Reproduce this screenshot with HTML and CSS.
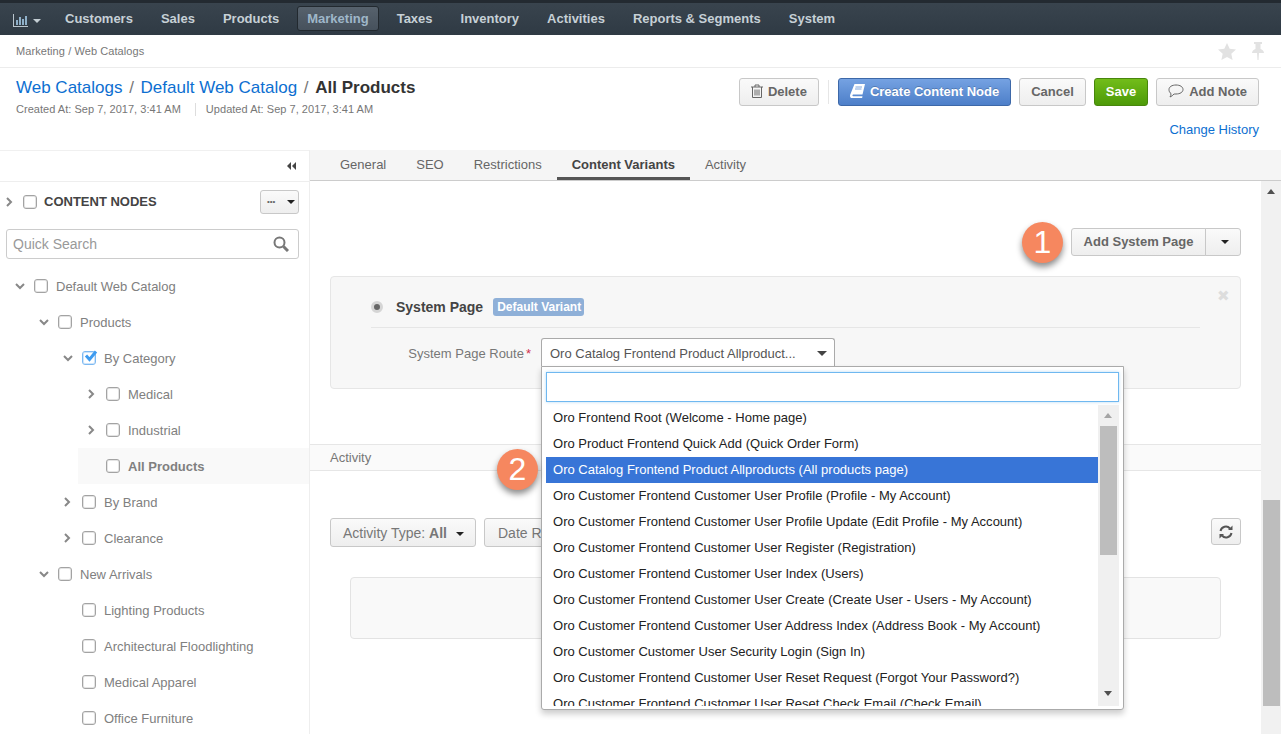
FILE: index.html
```html
<!DOCTYPE html>
<html lang="en">
<head>
    <meta charset="UTF-8">
    <title>All Products - Web Catalogs</title>
    <link rel="stylesheet" href="styles.css">
</head>
<body>
    <nav class="topnav">
        <div class="nav-dash">
            <svg width="15" height="13" viewBox="0 0 15 13"><path d="M0 0h1v12h14v1H0z" fill="#b9c5cd"/><path d="M3 6h2v5H3zM6 3h2v8H6zM9 5h2v6H9zM12 2h2v9h-2z" fill="#8fb0c9"/></svg>
            <span class="nav-caret"></span>
        </div>
        <a class="nav-item">Customers</a>
        <a class="nav-item">Sales</a>
        <a class="nav-item">Products</a>
        <a class="nav-item active">Marketing</a>
        <a class="nav-item">Taxes</a>
        <a class="nav-item">Inventory</a>
        <a class="nav-item">Activities</a>
        <a class="nav-item">Reports &amp; Segments</a>
        <a class="nav-item">System</a>
    </nav>

    <div class="crumbs">
        <span>Marketing / Web Catalogs</span>
        <div class="crumb-icons">
            <svg width="18" height="17" viewBox="0 0 18 17"><path d="M9 0l2.700 5.800 6.300.7-4.700 4.200 1.300 6.300L9 13.900 3.400 17l1.300-6.300L0 6.500l6.300-.7z" fill="#e2e2e2"/></svg>
            <svg width="14" height="18" viewBox="0 0 14 18"><path d="M3 0h8v2H9.500v5c2.500 1 3.500 2.500 3.500 4H8l-.5 7h-1L6 11H1c0-1.500 1-3 3.500-4V2H3z" fill="#e2e2e2"/></svg>
        </div>
    </div>

    <header class="page-head">
        <div>
            <h1 class="title"><a>Web Catalogs</a><i>/</i><a>Default Web Catalog</a><i>/</i><b>All Products</b></h1>
            <div class="meta">
                <span>Created At: Sep 7, 2017, 3:41 AM</span>
                <span class="meta-second">Updated At: Sep 7, 2017, 3:41 AM</span>
            </div>
        </div>
        <div class="head-right">
            <div class="actions">
                <button class="btn">
                    <svg width="12" height="14" viewBox="0 0 12 14" fill="none" stroke="#666"><path d="M0 3h12M4 3V1h4v2M1.500 3v10.500h9V3M4 5.500v6M6 5.500v6M8 5.500v6"/></svg>
                    Delete
                </button>
                <span class="actions-sep"></span>
                <button class="btn btn-blue">
                    <svg width="15" height="14" viewBox="0 0 15 14"><path d="M4.500 0H15l-2.500 10.500H3.500c-1.200 0-1.500 1.700-.3 1.700h9.300l-.4 1.800H2C.3 14-.3 12.500.2 10.800z" fill="#fff"/><path d="M5.500 3h6.500M5 5h6.500" stroke="#7ea6df" fill="none"/></svg>
                    Create Content Node
                </button>
                <button class="btn">Cancel</button>
                <button class="btn btn-green">Save</button>
                <button class="btn">
                    <svg width="16" height="14" viewBox="0 0 16 14" fill="none" stroke="#666"><path d="M8 1c4 0 7 1.800 7 4.500S12 10 8 10c-1 0-1.500 0-2 0-1 1.200-2.500 2.500-4 3 .7-1 1-2 1-3.500C1.500 8.700 1 7 1 5.500 1 2.800 4 1 8 1z"/></svg>
                    Add Note
                </button>
            </div>
            <a class="history">Change History</a>
        </div>
    </header>

    <div class="main">
        <aside class="sidebar">
            <div class="side-top">
                <svg width="9" height="8" viewBox="0 0 9 8"><path d="M4 0v8L0 4zM9 0v8L5 4z" fill="#444"/></svg>
            </div>
            <div class="nodes-head">
                <svg class="chev" width="7" height="10" viewBox="0 0 7 10"><path d="M1 1l4 4-4 4" fill="none" stroke="#888" stroke-width="2"/></svg>
                <span class="check"></span>
                <strong>CONTENT NODES</strong>
                <button class="dots-btn"><span>&#8226;&#8226;&#8226;</span><span class="caret"></span></button>
            </div>
            <div class="quick-search">
                <span>Quick Search</span>
                <svg width="16" height="16" viewBox="0 0 16 16" fill="none" stroke="#777"><circle cx="6.500" cy="6.500" r="5" stroke-width="2"/><path d="M10.500 10.500l4.500 4.500" stroke-width="3"/></svg>
            </div>
            <ul class="tree">
                <li class="row lvl0"><svg class="arrow" width="10" height="7" viewBox="0 0 10 7"><path d="M1 1l4 4 4-4" fill="none" stroke="#888" stroke-width="2"/></svg><span class="check"></span>Default Web Catalog</li>
                <li class="row lvl1"><svg class="arrow" width="10" height="7" viewBox="0 0 10 7"><path d="M1 1l4 4 4-4" fill="none" stroke="#888" stroke-width="2"/></svg><span class="check"></span>Products</li>
                <li class="row lvl2"><svg class="arrow" width="10" height="7" viewBox="0 0 10 7"><path d="M1 1l4 4 4-4" fill="none" stroke="#888" stroke-width="2"/></svg>
                    <span class="check checked"><svg width="15" height="13" viewBox="0 0 15 13"><path d="M3 5.500l3.500 4L13 1.500" fill="none" stroke="#3d9bf0" stroke-width="3"/></svg></span>By Category</li>
                <li class="row lvl3"><svg class="arrow side" width="7" height="10" viewBox="0 0 7 10"><path d="M1 1l4 4-4 4" fill="none" stroke="#888" stroke-width="2"/></svg><span class="check"></span>Medical</li>
                <li class="row lvl3"><svg class="arrow side" width="7" height="10" viewBox="0 0 7 10"><path d="M1 1l4 4-4 4" fill="none" stroke="#888" stroke-width="2"/></svg><span class="check"></span>Industrial</li>
                <li class="row lvl3 current"><span class="arrow-gap"></span><span class="check"></span>All Products</li>
                <li class="row lvl2"><svg class="arrow side" width="7" height="10" viewBox="0 0 7 10"><path d="M1 1l4 4-4 4" fill="none" stroke="#888" stroke-width="2"/></svg><span class="check"></span>By Brand</li>
                <li class="row lvl2"><svg class="arrow side" width="7" height="10" viewBox="0 0 7 10"><path d="M1 1l4 4-4 4" fill="none" stroke="#888" stroke-width="2"/></svg><span class="check"></span>Clearance</li>
                <li class="row lvl1"><svg class="arrow" width="10" height="7" viewBox="0 0 10 7"><path d="M1 1l4 4 4-4" fill="none" stroke="#888" stroke-width="2"/></svg><span class="check"></span>New Arrivals</li>
                <li class="row lvl2"><span class="arrow-gap"></span><span class="check"></span>Lighting Products</li>
                <li class="row lvl2"><span class="arrow-gap"></span><span class="check"></span>Architectural Floodlighting</li>
                <li class="row lvl2"><span class="arrow-gap"></span><span class="check"></span>Medical Apparel</li>
                <li class="row lvl2"><span class="arrow-gap"></span><span class="check"></span>Office Furniture</li>
            </ul>
        </aside>

        <section class="content">
            <div class="tabs">
                <a class="tab">General</a>
                <a class="tab">SEO</a>
                <a class="tab">Restrictions</a>
                <a class="tab active">Content Variants</a>
                <a class="tab">Activity</a>
            </div>
            <div class="content-body">
                <div class="pane">
                    <div class="add-row">
                        <div class="split">
                            <button class="split-main">Add System Page</button>
                            <button class="split-caret"><span class="caret"></span></button>
                        </div>
                    </div>
                    <div class="variant">
                        <span class="variant-close">&#10006;</span>
                        <div class="variant-head">
                            <span class="radio"></span>
                            <strong>System Page</strong>
                            <span class="badge">Default Variant</span>
                        </div>
                        <div class="variant-field">
                            <label>System Page Route<em>*</em></label>
                            <div class="select">
                                <span>Oro Catalog Frontend Product Allproduct...</span>
                                <span class="caret"></span>
                            </div>
                        </div>
                    </div>
                    <div class="activity-bar">Activity</div>
                    <div class="filters">
                        <button class="filter">Activity Type: <b>All</b><span class="caret"></span></button>
                        <button class="filter filter-date">Date R</button>
                        <button class="refresh">
                            <svg width="14" height="14" viewBox="0 0 14 14" fill="none" stroke="#555" stroke-width="2"><path d="M1.500 6a5.500 5.500 0 0 1 9.500-2.500M12.500 8A5.500 5.500 0 0 1 3 10.500"/><path d="M9 5h4.500V.5zM5 9H.5v4.500z" fill="#555" stroke="none"/></svg>
                        </button>
                    </div>
                    <div class="empty-box"></div>

                    <div class="dropdown">
                        <div class="dd-search"></div>
                        <div class="dd-results">
                            <ul class="dd-list">
                                <li>Oro Frontend Root (Welcome - Home page)</li>
                                <li>Oro Product Frontend Quick Add (Quick Order Form)</li>
                                <li class="selected">Oro Catalog Frontend Product Allproducts (All products page)</li>
                                <li>Oro Customer Frontend Customer User Profile (Profile - My Account)</li>
                                <li>Oro Customer Frontend Customer User Profile Update (Edit Profile - My Account)</li>
                                <li>Oro Customer Frontend Customer User Register (Registration)</li>
                                <li>Oro Customer Frontend Customer User Index (Users)</li>
                                <li>Oro Customer Frontend Customer User Create (Create User - Users - My Account)</li>
                                <li>Oro Customer Frontend Customer User Address Index (Address Book - My Account)</li>
                                <li>Oro Customer Customer User Security Login (Sign In)</li>
                                <li>Oro Customer Frontend Customer User Reset Request (Forgot Your Password?)</li>
                                <li>Oro Customer Frontend Customer User Reset Check Email (Check Email)</li>
                            </ul>
                            <div class="dd-scroll">
                                <span class="arrow-up"></span>
                                <span class="dd-thumb"></span>
                                <span class="arrow-down"></span>
                            </div>
                        </div>
                    </div>
                    <span class="step step-one">1</span>
                    <span class="step step-two">2</span>
                </div>
                <div class="page-scroll">
                    <span class="arrow-up dark"></span>
                    <span class="page-thumb"></span>
                </div>
            </div>
        </section>
    </div>
</body>
</html>
```

FILE: styles.css
```css
* {
    box-sizing: border-box;
}
html, body {
    margin: 0;
    height: 734px;
    overflow: hidden;
}
body {
    font-family: "Liberation Sans", Arial, sans-serif;
    font-size: 13px;
    color: #666;
    background-color: #fff;
}
ul {
    list-style: none;
    margin: 0;
    padding: 0;
}
button {
    font-family: inherit;
}

/* top menu */
.topnav {
    height: 35px;
    display: flex;
    align-items: center;
    gap: 8px;
    padding-left: 13px;
    padding-top: 3px;
    background: linear-gradient(#39444e, #2f3a44);
    border-top: 3px solid #232a31;
}
.nav-dash {
    width: 34px;
    display: flex;
    align-items: center;
    gap: 5px;
}
.nav-caret {
    border: 4px solid transparent;
    border-top-color: #c4ced4;
    border-bottom: 0;
}
.nav-item {
    padding: 0 10px;
    height: 24px;
    line-height: 22px;
    font-weight: bold;
    color: #c6d0d6;
    border: 1px solid transparent;
    border-width: 1px 0;
    margin-top: -3px;
}
.nav-item.active {
    color: #9fb7c9;
    height: 25px;
    margin-top: -4px;
    line-height: 23px;
    background: linear-gradient(#57626d, #46515c);
    border: 1px solid #22292f;
    border-radius: 3px;
    padding: 0 9px;
}

/* breadcrumbs */
.crumbs {
    height: 33px;
    padding: 0 16px;
    display: flex;
    justify-content: space-between;
    align-items: center;
    font-size: 11px;
    letter-spacing: .08px;
    color: #777;
    border-bottom: 1px solid #ececec;
}
.crumb-icons {
    display: flex;
    align-items: center;
    gap: 15px;
}

.page-head {
    height: 82px;
    padding: 0 22px 0 16px;
    display: flex;
    justify-content: space-between;
}
.title {
    margin: 10px 0 0;
    font-size: 17px;
    line-height: 20px;
    font-weight: normal;
    color: #333;
}
.title a {
    color: #0d6fd1;
}
.title i {
    font-style: normal;
    color: #777;
    margin: 0 6.7px;
}
.meta {
    margin-top: 5px;
    font-size: 11px;
    line-height: 13px;
    letter-spacing: .03px;
    color: #777;
    display: flex;
}
.meta-second {
    margin-left: 14px;
    padding-left: 10px;
    border-left: 1px solid #ddd;
}
.head-right {
    display: flex;
    flex-direction: column;
    align-items: flex-end;
}
.actions {
    margin-top: 10px;
    display: flex;
    align-items: center;
    gap: 8px;
}
.btn {
    height: 28px;
    padding: 0 11px 2px;
    display: flex;
    align-items: center;
    gap: 5px;
    font-size: 13px;
    font-weight: bold;
    color: #666;
    background: linear-gradient(#fafafa, #eee);
    border: 1px solid #c8c8c8;
    border-radius: 3px;
}
.btn-blue {
    color: #fff;
    background: linear-gradient(#75a2e2, #4d7fc9);
    border-color: #3d68a8;
    text-shadow: 0 -1px 0 rgba(0, 0, 0, .2);
}
.btn-green {
    color: #fff;
    background: linear-gradient(#72bd1a, #4d9a08);
    border-color: #48860d;
}
.actions-sep {
    width: 1px;
    height: 24px;
    margin: 0 1px;
    background-color: #e6e6e6;
}
.history {
    margin-top: 16px;
    color: #0d6fd1;
}

.main {
    height: 584px;
    display: flex;
}

/* sidebar tree */
.sidebar {
    width: 310px;
    flex: none;
    border-right: 1px solid #eee;
    overflow: hidden;
}
.side-top {
    height: 32px;
    padding-right: 13px;
    display: flex;
    justify-content: flex-end;
    align-items: center;
    border-top: 1px solid #f0f0f0;
    border-bottom: 1px solid #eee;
}
.nodes-head {
    height: 39px;
    margin-bottom: 8px;
    padding: 0 10px 0 6px;
    display: flex;
    align-items: center;
}
.nodes-head .chev {
    margin-right: 10px;
}
.nodes-head strong {
    margin-left: 7px;
    font-size: 13px;
    color: #444;
}
.check {
    width: 14px;
    height: 14px;
    flex: none;
    border: 1px solid #a3a3a3;
    border-radius: 3px;
    box-shadow: inset 0 0 0 1px #e4e4e4;
    background-color: #fff;
    position: relative;
}
.check.checked {
    border-color: #7cb9f2;
    box-shadow: inset 0 0 0 1px #cfe4f9;
}
.check svg {
    position: absolute;
    left: 0;
    top: -2px;
}
.dots-btn {
    margin-left: auto;
    width: 39px;
    height: 24px;
    padding: 0 3px 0 6px;
    display: flex;
    justify-content: space-between;
    align-items: center;
    font-size: 8px;
    color: #666;
    background: linear-gradient(#fafafa, #eee);
    border: 1px solid #c8c8c8;
    border-radius: 3px;
}
.caret {
    display: inline-block;
    border: 4px solid transparent;
    border-top-color: #222;
    border-bottom: 0;
}
.quick-search {
    height: 30px;
    margin: 0 10px 0 6px;
    padding: 0 9px 0 6px;
    display: flex;
    justify-content: space-between;
    align-items: center;
    font-size: 14px;
    color: #999;
    border: 1px solid #ccc;
    border-radius: 3px;
}
.tree {
    margin-top: 9px;
}
.row {
    height: 36px;
    display: flex;
    align-items: center;
    color: #808080;
}
.row .check {
    margin-right: 8px;
}
.lvl0 { margin-left: 6px; }
.lvl1 { margin-left: 30px; }
.lvl2 { margin-left: 54px; }
.lvl3 { margin-left: 78px; }
.arrow {
    margin: 0 9px 0 9px;
    flex: none;
}
.arrow.side {
    margin: 0 11px 0 10px;
}
.arrow-gap {
    width: 28px;
    flex: none;
}
.row.current {
    font-weight: bold;
    background-color: #f9f9f9;
}

/* right side */
.content {
    flex: 1;
    min-width: 0;
}
.tabs {
    height: 31px;
    padding-left: 15px;
    display: flex;
    background-color: #f5f5f5;
    border-bottom: 1px solid #ccc;
}
.tab {
    padding: 0 15px;
    line-height: 29px;
    color: #666;
}
.tab.active {
    height: 30px;
    font-weight: bold;
    color: #444;
    border-bottom: 3px solid #555;
}
.content-body {
    height: 553px;
    display: flex;
}
.pane {
    flex: 1;
    position: relative;
    overflow: hidden;
}
.add-row {
    padding: 47px 20px 20px;
    display: flex;
    justify-content: flex-end;
}
.split {
    display: flex;
    height: 28px;
}
.split button {
    font-size: 13px;
    font-weight: bold;
    color: #666;
    background: linear-gradient(#fafafa, #eee);
    border: 1px solid #c8c8c8;
}
.split-main {
    width: 135px;
    padding-bottom: 2px;
    border-radius: 3px 0 0 3px;
}
.split-caret {
    width: 36px;
    margin-left: -1px;
    padding: 0 0 0 3px;
    display: flex;
    justify-content: center;
    align-items: center;
    border-radius: 0 3px 3px 0;
}
.variant {
    height: 113px;
    margin: 0 20px;
    padding: 0 40px;
    background-color: #f7f7f7;
    border: 1px solid #e6e6e6;
    border-radius: 4px;
    position: relative;
}
.variant-close {
    position: absolute;
    right: 10px;
    top: 10px;
    font-size: 15px;
    color: #ddd;
}
.variant-head {
    height: 51px;
    padding-top: 10px;
    display: flex;
    align-items: center;
    border-bottom: 1px solid #e6e6e6;
}
.radio {
    width: 12px;
    height: 12px;
    border-radius: 50%;
    border: 3px solid #d5d5d5;
    background-color: #666;
    margin-right: 13px;
}
.variant-head strong {
    font-size: 14px;
    color: #444;
}
.badge {
    margin-left: 10px;
    padding: 0 4px;
    width: 91px;
    height: 18px;
    line-height: 18px;
    font-size: 12px;
    font-weight: bold;
    white-space: nowrap;
    color: #fff;
    background-color: #8fb0d8;
    border-radius: 3px;
}
.variant-field {
    margin-top: 10px;
    display: flex;
    align-items: flex-start;
}
.variant-field label {
    width: 160px;
    text-align: right;
    line-height: 32px;
    color: #777;
}
.variant-field em {
    font-style: normal;
    color: #d0304f;
    margin-left: 2px;
}
.select {
    width: 294px;
    height: 28px;
    margin-left: 10px;
    padding: 2px 7px 0 8px;
    display: flex;
    justify-content: space-between;
    align-items: center;
    color: #555;
    background-color: #fff;
    border: 1px solid #aaa;
    border-bottom: 0;
    border-radius: 3px 3px 0 0;
}
.select .caret {
    border-width: 5px;
    border-bottom: 0;
    border-top-color: #444;
}
.activity-bar {
    height: 27px;
    margin-top: 55px;
    padding-left: 20px;
    line-height: 25px;
    color: #777;
    background-color: #fafafa;
    border-top: 1px solid #e6e6e6;
    border-bottom: 1px solid #e6e6e6;
}
.filters {
    margin-top: 47px;
    padding: 0 20px;
    display: flex;
    gap: 8px;
}
.filter {
    height: 29px;
    padding: 0 11px 0 12px;
    font-size: 14px;
    color: #777;
    background: linear-gradient(#fafafa, #eee);
    border: 1px solid #c8c8c8;
    border-radius: 3px;
}
.filter .caret {
    margin-left: 9px;
    vertical-align: 2px;
}
.filter-date {
    width: 200px;
    padding-left: 13px;
    text-align: left;
}
.refresh {
    margin-left: auto;
    width: 30px;
    height: 27px;
    padding: 0;
    display: flex;
    justify-content: center;
    align-items: center;
    background: linear-gradient(#fafafa, #eee);
    border: 1px solid #c8c8c8;
    border-radius: 3px;
}
.empty-box {
    height: 62px;
    margin: 30px 40px 0;
    background-color: #f9f9f9;
    border: 1px solid #e3e3e3;
    border-radius: 4px;
}

/* open select dropdown */
.dropdown {
    position: absolute;
    left: 231px;
    top: 185px;
    width: 583px;
    height: 344px;
    padding: 5px 4px 0;
    background-color: #fff;
    border: 1px solid #aaa;
    border-radius: 0 0 3px 3px;
    box-shadow: 0 4px 6px rgba(0, 0, 0, .2);
}
.dd-search {
    height: 30px;
    border: 1px solid #6fb8f0;
    box-shadow: 0 0 3px rgba(111, 184, 240, .5);
}
.dd-results {
    margin-top: 3px;
    height: 301px;
    display: flex;
    overflow: hidden;
}
.dd-list {
    width: 552px;
    flex: none;
}
.dd-list li {
    height: 26px;
    line-height: 25px;
    padding-left: 7px;
    letter-spacing: .015px;
    color: #222;
    white-space: nowrap;
}
.dd-list li.selected {
    color: #fff;
    background-color: #3875d7;
}
.dd-scroll {
    width: 21px;
    position: relative;
    background-color: #f0f0f0;
}
.dd-thumb {
    position: absolute;
    left: 2px;
    top: 21px;
    width: 17px;
    height: 129px;
    background-color: #bdbdbd;
}
.arrow-up, .arrow-down {
    position: absolute;
    left: 6px;
    border: 4px solid transparent;
    border-width: 5px 4.5px;
}
.arrow-up {
    top: 8px;
    border-top: 0;
    border-bottom-color: #a5a5a5;
}
.arrow-down {
    bottom: 10px;
    border-bottom: 0;
    border-top-color: #505050;
}

/* callout numbers */
.step {
    position: absolute;
    width: 41px;
    height: 41px;
    text-align: center;
    line-height: 41px;
    font-size: 32px;
    color: #fff;
    background-color: #f6875f;
    border-radius: 50%;
    box-shadow: 0 4px 6px rgba(0, 0, 0, .45);
}
.step-one {
    left: 712px;
    top: 41px;
}
.step-two {
    left: 187px;
    top: 268px;
}

.page-scroll {
    width: 20px;
    flex: none;
    position: relative;
    background-color: #f1f1f1;
}
.arrow-up.dark {
    left: 6px;
    top: 8px;
    border-bottom-color: #505050;
}
.page-thumb {
    position: absolute;
    left: 2px;
    top: 319px;
    width: 17px;
    height: 206px;
    background-color: #bdbdbd;
}
```
